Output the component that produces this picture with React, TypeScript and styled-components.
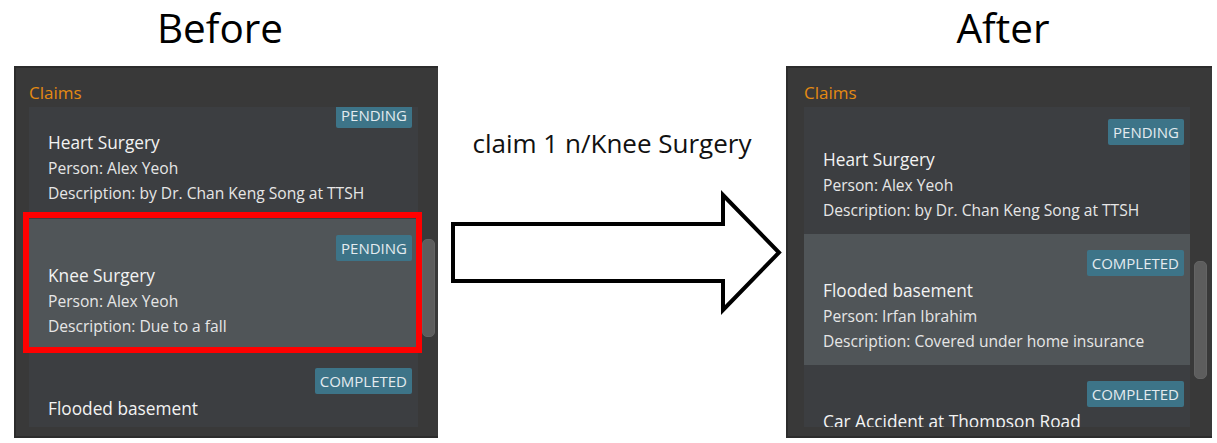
import React from "react";
import styled, { createGlobalStyle } from "styled-components";

const Global = createGlobalStyle`
  html, body { margin: 0; padding: 0; background: #ffffff; }
  body { font-family: "Open Sans", "Noto Sans", sans-serif; }
  * { box-sizing: border-box; }
`;

const Page = styled.div`
  width: 1217px;
  height: 443px;
  padding-left: 14px;
  display: grid;
  grid-template-columns: 424px 348px 426px;
  grid-template-rows: 66px 372px;
  overflow: hidden;
`;

const Heading = styled.h1<{ $shift: number }>`
  margin: 0;
  transform: translateX(${(p) => p.$shift}px);
  text-align: center;
  font-family: "Open Sans", sans-serif;
  font-weight: 400;
  font-size: 40.5px;
  line-height: 55px;
  color: #000;
`;

const Middle = styled.div`
  display: flex;
  flex-direction: column;
  align-items: center;
`;

const Command = styled.div`
  margin-top: 60px;
  font-family: "Open Sans", sans-serif;
  font-size: 26px;
  line-height: 34px;
  color: #111;
`;

const ArrowSvg = styled.svg`
  display: block;
  margin-top: 28px;
`;

const Panel = styled.section<{ $padLeft: number; $padRight: number }>`
  position: relative;
  height: 372px;
  background: #393939;
  border: 2px solid #2c2c2c;
  border-right: none;
  padding: 14px ${(p) => p.$padRight}px 9px ${(p) => p.$padLeft}px;
  display: flex;
  flex-direction: column;
`;

const PanelTitle = styled.div`
  font-size: 17px;
  line-height: 22px;
  color: #e58a12;
  margin-bottom: 3px;
`;

const PanelBody = styled.div`
  flex: 1;
  display: flex;
  gap: 4px;
  min-height: 0;
`;

const List = styled.div`
  flex: 1;
  background: #3c3e41;
  overflow: hidden;
`;

const ListInner = styled.div<{ $scroll: number }>`
  margin-top: ${(p) => -p.$scroll}px;
`;

const Track = styled.div`
  width: 13px;
  position: relative;
`;

const Thumb = styled.div<{ $top: number; $height: number }>`
  position: absolute;
  left: 0;
  right: 0;
  top: ${(p) => p.$top}px;
  height: ${(p) => p.$height}px;
  background: #5d5d5d;
  border: 1px solid #646464;
  border-radius: 5px;
`;

const Card = styled.div<{ $selected?: boolean; $height: number }>`
  height: ${(p) => p.$height}px;
  padding: 16px 6px 0 19px;
  background: ${(p) => (p.$selected ? "#505558" : "transparent")};
  display: flex;
  flex-direction: column;
  flex-shrink: 0;
`;

const BadgeRow = styled.div`
  display: flex;
  justify-content: flex-end;
  height: 26px;
`;

const Badge = styled.span`
  display: inline-flex;
  align-items: center;
  height: 26px;
  padding: 0 5px;
  background: #3d7488;
  border-radius: 2px;
  color: #e3ebef;
  font-size: 15px;
  line-height: 26px;
`;

const Title = styled.div`
  padding-top: 2px;
  font-size: 17.3px;
  line-height: 26px;
  color: #f3f3f3;
  white-space: nowrap;
`;

const Detail = styled.div`
  font-size: 15.6px;
  line-height: 25px;
  color: #e6e6e6;
  white-space: nowrap;
`;

const Highlight = styled.div`
  position: absolute;
  left: 7px;
  top: 144px;
  width: 399px;
  height: 141px;
  border: 6px solid #ff0000;
  pointer-events: none;
`;

type Claim = {
  status: "PENDING" | "COMPLETED";
  title: string;
  person?: string;
  description?: string;
  selected?: boolean;
};

const ClaimCard = ({ claim, height }: { claim: Claim; height: number }) => (
  <Card $selected={claim.selected} $height={height}>
    <BadgeRow>
      <Badge>{claim.status}</Badge>
    </BadgeRow>
    <Title>{claim.title}</Title>
    {claim.person && <Detail>Person: {claim.person}</Detail>}
    {claim.description && <Detail>Description: {claim.description}</Detail>}
  </Card>
);

const ClaimsPanel = ({
  claims,
  scroll,
  cardHeight,
  thumbTop,
  thumbHeight,
  padLeft,
  padRight,
  children,
}: {
  claims: Claim[];
  scroll: number;
  cardHeight: number;
  thumbTop: number;
  thumbHeight: number;
  padLeft: number;
  padRight: number;
  children?: React.ReactNode;
}) => (
  <Panel $padLeft={padLeft} $padRight={padRight}>
    <PanelTitle>Claims</PanelTitle>
    <PanelBody>
      <List>
        <ListInner $scroll={scroll}>
          {claims.map((c, i) => (
            <ClaimCard key={i} claim={c} height={cardHeight} />
          ))}
        </ListInner>
      </List>
      <Track>
        <Thumb $top={thumbTop} $height={thumbHeight} />
      </Track>
    </PanelBody>
    {children}
  </Panel>
);

const before: Claim[] = [
  {
    status: "PENDING",
    title: "Heart Surgery",
    person: "Alex Yeoh",
    description: "by Dr. Chan Keng Song at TTSH",
  },
  {
    status: "PENDING",
    title: "Knee Surgery",
    person: "Alex Yeoh",
    description: "Due to a fall",
    selected: true,
  },
  {
    status: "COMPLETED",
    title: "Flooded basement",
    person: "Irfan Ibrahim",
    description: "Covered under home insurance",
  },
];

const after: Claim[] = [
  {
    status: "PENDING",
    title: "Heart Surgery",
    person: "Alex Yeoh",
    description: "by Dr. Chan Keng Song at TTSH",
  },
  {
    status: "COMPLETED",
    title: "Flooded basement",
    person: "Irfan Ibrahim",
    description: "Covered under home insurance",
    selected: true,
  },
  {
    status: "COMPLETED",
    title: "Car Accident at Thompson Road",
  },
];

export default function App() {
  return (
    <>
      <Global />
      <Page>
        <Heading $shift={-6}>Before</Heading>
        <div />
        <Heading $shift={4}>After</Heading>
        <ClaimsPanel
          claims={before}
          scroll={21}
          cardHeight={133}
          thumbTop={132}
          thumbHeight={98}
          padLeft={13}
          padRight={3}
        >
          <Highlight />
        </ClaimsPanel>
        <Middle>
          <Command>claim 1 n/Knee Surgery</Command>
          <ArrowSvg width="348" height="130" viewBox="0 0 348 130">
            <polygon
              points="15,36 285,36 285,7 341,64.5 285,122 285,93 15,93"
              fill="#ffffff"
              stroke="#000000"
              strokeWidth="4"
              strokeLinejoin="miter"
            />
          </ArrowSvg>
        </Middle>
        <ClaimsPanel
          claims={after}
          scroll={4}
          cardHeight={131}
          thumbTop={154}
          thumbHeight={118}
          padLeft={16}
          padRight={5}
        />
      </Page>
    </>
  );
}
